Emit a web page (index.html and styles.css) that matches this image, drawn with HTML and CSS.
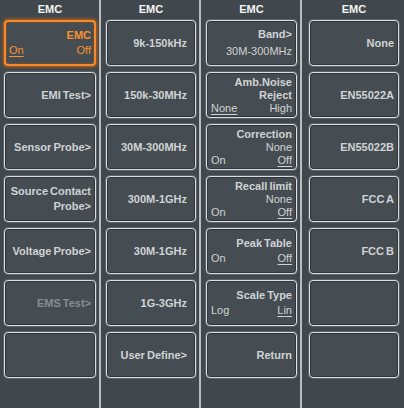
FILE: index.html
```html
<!DOCTYPE html>
<html lang="en">
  <head>
    <meta charset="UTF-8" />
    <title>EMC Menu</title>
    <link rel="stylesheet" href="styles.css">
  </head>
  <body>
    <div class="panel">
      <div class="column first">
        <div class="header">EMC</div>
        <div class="buttons">
          <div class="btn selected">
            <span class="title">EMC</span>
            <div class="split"><span class="on">On</span><span>Off</span></div>
          </div>
          <div class="btn"><span class="title">EMI Test&gt;</span></div>
          <div class="btn"><span class="title">Sensor Probe&gt;</span></div>
          <div class="btn two">
            <span class="title">Source Contact</span>
            <span class="title">Probe&gt;</span>
          </div>
          <div class="btn"><span class="title">Voltage Probe&gt;</span></div>
          <div class="btn"><span class="title disabled">EMS Test&gt;</span></div>
          <div class="btn"></div>
        </div>
      </div>

      <div class="column second">
        <div class="header">EMC</div>
        <div class="buttons">
          <div class="btn"><span class="title">9k-150kHz</span></div>
          <div class="btn"><span class="title">150k-30MHz</span></div>
          <div class="btn"><span class="title">30M-300MHz</span></div>
          <div class="btn"><span class="title">300M-1GHz</span></div>
          <div class="btn"><span class="title">30M-1GHz</span></div>
          <div class="btn"><span class="title">1G-3GHz</span></div>
          <div class="btn"><span class="title">User Define&gt;</span></div>
        </div>
      </div>

      <div class="column">
        <div class="header">EMC</div>
        <div class="buttons">
          <div class="btn band">
            <span class="title">Band&gt;</span>
            <span class="value">30M-300MHz</span>
          </div>
          <div class="btn three">
            <span class="title">Amb.Noise</span>
            <span class="title">Reject</span>
            <div class="split"><span class="sel">None</span><span class="value">High</span></div>
          </div>
          <div class="btn three">
            <span class="title">Correction</span>
            <span class="value">None</span>
            <div class="split"><span>On</span><span class="sel">Off</span></div>
          </div>
          <div class="btn three">
            <span class="title">Recall limit</span>
            <span class="value">None</span>
            <div class="split"><span>On</span><span class="sel">Off</span></div>
          </div>
          <div class="btn two">
            <span class="title">Peak Table</span>
            <div class="split"><span>On</span><span class="sel">Off</span></div>
          </div>
          <div class="btn two">
            <span class="title">Scale Type</span>
            <div class="split"><span>Log</span><span class="sel">Lin</span></div>
          </div>
          <div class="btn"><span class="title">Return</span></div>
        </div>
      </div>

      <div class="column last">
        <div class="header">EMC</div>
        <div class="buttons">
          <div class="btn"><span class="title">None</span></div>
          <div class="btn"><span class="title">EN55022A</span></div>
          <div class="btn"><span class="title">EN55022B</span></div>
          <div class="btn"><span class="title">FCC A</span></div>
          <div class="btn"><span class="title">FCC B</span></div>
          <div class="btn"></div>
          <div class="btn"></div>
        </div>
      </div>
    </div>
  </body>
</html>
```

FILE: styles.css
```css
* {
  box-sizing: border-box;
}

body {
  margin: 0;
  width: 404px;
  height: 408px;
  overflow: hidden;
  background: #41484d;
  font-family: "Liberation Sans", Arial, sans-serif;
  font-size: 11px;
  color: #d0d3d5;
}

.panel {
  display: grid;
  grid-template-columns: 101px 100px 101px 102px;
  height: 408px;
}

.column {
  padding: 0 3px 0 5px;
  border-right: 2px solid #b9bdc0;
}

.column.first {
  padding-left: 4px;
}

.column.last {
  border-right: none;
  padding: 0 5px 0 7px;
}

.header {
  height: 19px;
  line-height: 18px;
  text-align: center;
  font-weight: bold;
  color: #f4f4f4;
}

.buttons {
  display: flex;
  flex-direction: column;
  gap: 6px;
  padding-top: 1px;
}

.btn {
  height: 46px;
  display: flex;
  flex-direction: column;
  justify-content: center;
  align-items: flex-end;
  padding: 0 4px;
  border: 1px solid #dcdfe1;
  border-radius: 4px;
  background: #464d52;
  box-shadow: 0 0 0 1px #5c6368, inset 0 0 0 1px #2f3539;
  line-height: 13px;
  white-space: nowrap;
  word-spacing: -1px;
}

.second .btn {
  padding-right: 8px;
}

.title {
  font-weight: bold;
}

.title.disabled {
  color: #868d93;
}

.value {
  font-weight: normal;
}

.split {
  display: flex;
  justify-content: space-between;
  width: 100%;
}

.sel {
  text-decoration: underline;
  text-underline-offset: 2px;
}

.two {
  gap: 2px;
}

.band {
  gap: 4px;
}

.selected {
  border: 2px solid #f68a2b;
  box-shadow: 0 0 3px 1px #c25f12, inset 0 0 2px #b0540f;
  color: #f7932f;
  padding: 0 3px;
}

.selected .split {
  margin-top: 2px;
}

.selected .on {
  text-decoration: underline;
  text-underline-offset: 2px;
}
```
